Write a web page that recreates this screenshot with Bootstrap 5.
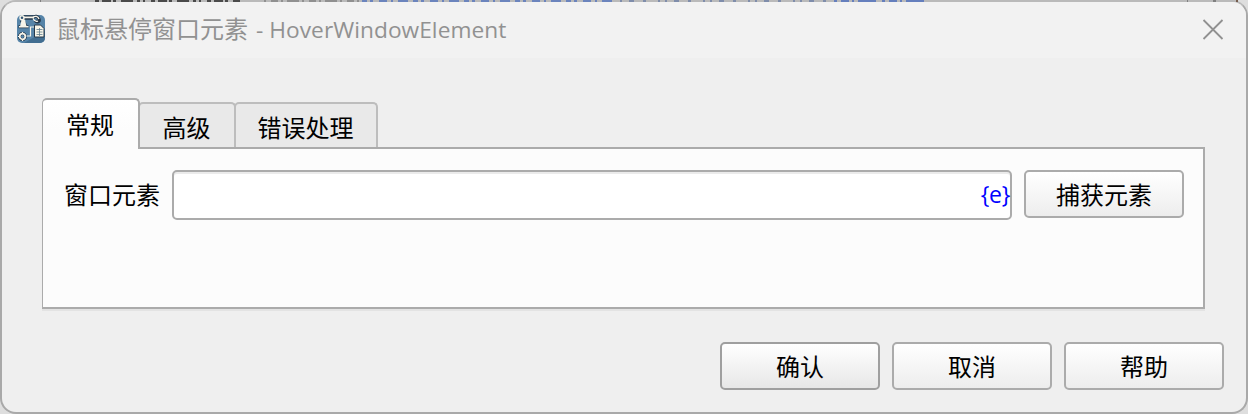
<!DOCTYPE html>
<html lang="zh-CN">
<head>
<meta charset="utf-8">
<meta name="viewport" content="width=device-width, initial-scale=1">
<title>HoverWindowElement</title>
<link href="https://cdn.jsdelivr.net/npm/bootstrap@5.3.0/dist/css/bootstrap.min.css" rel="stylesheet">
<style>
body{width:1248px;height:414px;background:#c3c3c3;color:#000;font:24px/32px "Noto Sans","Noto Sans CJK SC",sans-serif}
.backdrop-strip{position:absolute;inset:0;width:1248px;height:414px}
.backdrop-ink{position:absolute;left:0;top:0;width:1248px;height:2px;z-index:2}
.dialog{position:relative;width:1248px;height:414px;background:#efefef;border:2px solid #a9a9a9;border-top-color:#bababa;border-radius:16px}
.titlebar{height:56px;padding:0 22px 0 14px;background:#f2f2f2;color:#919191}
.app-icon{margin-bottom:2px}
.title-text{font-size:24px;white-space:pre;margin:0 0 2px 10px}
.title-latin{font-family:"Open Sans",sans-serif;font-size:22.7px;letter-spacing:.05px;margin-left:2px}
.main-area{padding:40px 41px 0 40px}
.nav-tabs{--bs-nav-tabs-border-width:0;height:51px;position:relative;z-index:1}
.nav-tabs .nav-link{font-size:24px;line-height:32px;color:#000;border:2px solid #bdbdbd;border-bottom:0;border-radius:5px 5px 0 0;background:#e9e9e9;height:45px;margin:0 0 0 -2px;padding:4px 1px 0 0}
.nav-tabs .nav-link.active{height:51px;width:98px;margin:0;padding:1px 1px 0 0;border-color:#ababab;border-left-width:1px;background:linear-gradient(#fff,#fcfcfc 60%);color:#000;position:relative;z-index:1}
.nav-tabs .tab-mid{width:98px}
.nav-tabs .tab-wide{width:144px}
.tab-body{height:162px;margin-top:-2px;background:#fcfcfc;border:2px solid #ababab;border-left-width:1px;box-shadow:0 2px 0 #e3e3e3;padding:21px 19px 0 21px}
.element-label{padding-top:9px}
.element-field{width:840px;height:50px;border:2px solid #ababab;border-radius:5px;background:#fff;box-shadow:inset 0 2px 0 #ebebeb;padding-right:0}
.var-mark{color:#00f;font-family:"Open Sans",sans-serif;font-size:23px;line-height:44px;letter-spacing:-.3px}
.btn-dialog{width:160px;height:48px;padding:1px 0 0;font-size:24px;line-height:32px;border:2px solid #ababab;border-radius:5px;background:linear-gradient(#fff,#ededed);color:#000}
.btn-dialog.is-default{border-color:#9f9f9f;background:linear-gradient(#fff,#e7e7e7)}
.actions{padding:33px 22px 0 0;gap:12px}
</style>
</head>
<body>
<svg class="backdrop-strip" viewBox="0 0 1248 414"><path fill="#dedede" d="M0 0h16v16H0zM1237 0h11v16h-11zM0 396h16v18H0zM1232 396h16v18h-16z"/></svg>
<div class="dialog overflow-hidden">
  <div class="titlebar d-flex align-items-center">
    <svg width="30" height="30" viewBox="0 0 30 30" class="app-icon flex-shrink-0">
      <rect x="1" y="1" width="28" height="28" rx="5" fill="#5684a8"/>
      <path d="M8 29 29 17v7a5 5 0 0 1-5 5z" fill="#426e91"/>
      <g stroke="#26394b" fill="none"><path d="M5 3.500h12M6 6l3 6" stroke-width="4.6"/><path d="M2.500 12.800h10" stroke-width="3"/><path d="M17 3.500c2-2 5-1.500 6 1.500s-2 4-4 1.500" stroke-width="3.2"/><circle cx="6.500" cy="22.500" r="3" stroke-width="3"/></g>
      <path d="m5.500 6 3.500-.5 1.500 7H4z" fill="#f6f4ea"/>
      <g stroke="#f6f4ea" fill="none"><path d="M7 3.300h11" stroke-width="1.8"/><circle cx="6" cy="3.800" r="2" fill="#315574" stroke-width="1.4"/><path d="M17 3.500c2-2 5-1.500 6 1.500M17 4.500c1 2 3 3.500 5 2.500" stroke-width="1.3"/><path d="M3 12.800h9.500" stroke-width="1.6"/><circle cx="6.500" cy="22.500" r="2.800" stroke-width="1.8"/><path d="M6.500 18v1.500M6.500 25.500V27M2 22.500h1.500M10.500 22h4v-9h4" stroke-width="1.2"/></g>
      <path d="M18.500 11h6l3.500 3.500v8.500h-9.500z" fill="#f7f5e9" stroke="#26394b"/>
      <path d="M20.500 15.500h6M20.500 18h6M20.500 20.500h6M23.500 14v8" stroke="#607d8e" stroke-width=".8"/>
    </svg>
    <div class="title-text">鼠标悬停窗口元素<span class="title-latin"> - HoverWindowElement</span></div>
    <svg class="ms-auto" width="22" height="22" viewBox="0 0 22 22" aria-label="关闭"><path d="m1.500 1 19 19M20.500 1l-19 19" stroke="#919191" stroke-width="1.8"/></svg>
  </div>
  <main class="main-area">
    <ul class="nav nav-tabs flex-nowrap align-items-start">
      <li class="nav-item"><a class="nav-link active d-flex align-items-center justify-content-center" href="#">常规</a></li>
      <li class="nav-item pt-1"><a class="nav-link tab-mid d-flex align-items-center justify-content-center" href="#">高级</a></li>
      <li class="nav-item pt-1"><a class="nav-link tab-wide d-flex align-items-center justify-content-center" href="#">错误处理</a></li>
    </ul>
    <section class="tab-body d-flex align-items-start justify-content-between">
      <label class="element-label">窗口元素</label>
      <div class="element-field text-end"><span class="var-mark">{e}</span></div>
      <button class="btn btn-dialog">捕获元素</button>
    </section>
  </main>
  <div class="actions d-flex justify-content-end">
    <button class="btn btn-dialog is-default">确认</button>
    <button class="btn btn-dialog">取消</button>
    <button class="btn btn-dialog">帮助</button>
  </div>
</div>
<svg class="backdrop-ink" viewBox="0 0 1248 2" fill="none" stroke-width="2">
  <path d="M95 1h145" stroke="#4a4a4a" stroke-dasharray="4 3 9 2 3 5 12 4 3 3 2 6"/>
  <path d="M264 1h98" stroke="#909090" stroke-dasharray="2 5 7 3 2 4 12 3"/>
  <path d="M362 1h253" stroke="#6b84bd" stroke-dasharray="5 3 3 6 8 4 2 5 10 5"/>
  <path d="M620 1h210" stroke="#7f8dab" stroke-dasharray="2 7 5 9 3 12 2 5"/>
  <path d="M834 1h94" stroke="#657fbd" stroke-dasharray="3 4 8 3 2 4 18 6"/>
  <path d="M40 1h1M1187 1h1M1213 1h3" stroke="#808080"/>
  <path d="M1236 1h2" stroke="#765d4d"/>
</svg>
<script src="https://cdn.jsdelivr.net/npm/bootstrap@5.3.0/dist/js/bootstrap.bundle.min.js"></script>
</body>
</html>
